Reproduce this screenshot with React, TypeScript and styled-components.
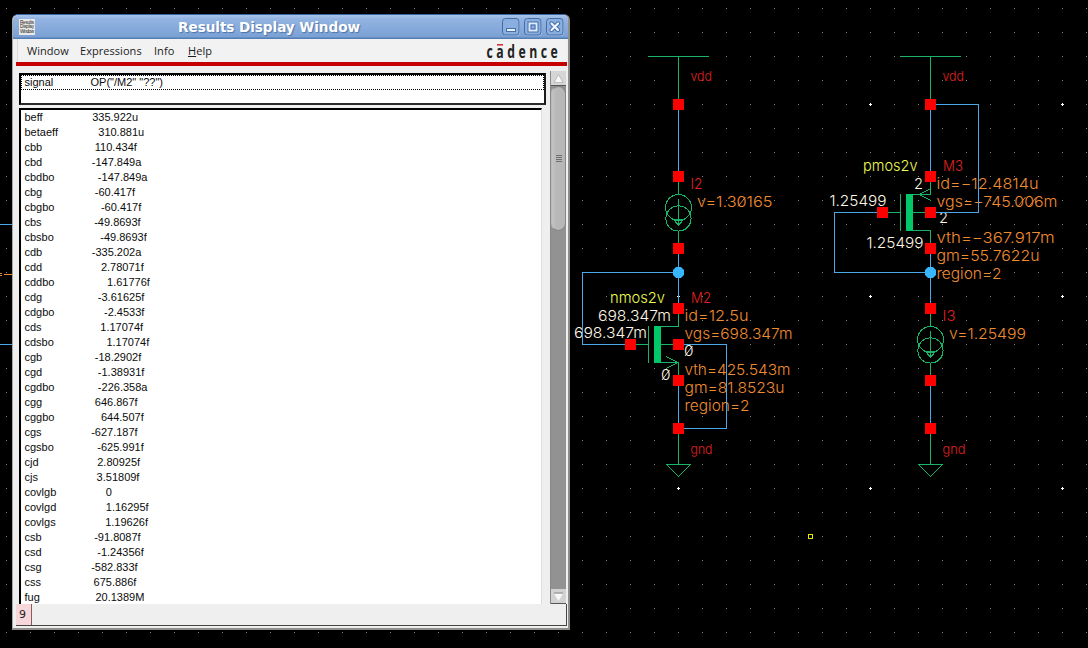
import React from 'react';
import styled, { createGlobalStyle } from 'styled-components';

const Global = createGlobalStyle`
  html, body { margin: 0; padding: 0; background: #000; overflow: hidden; }
  * { box-sizing: border-box; }
`;

const Desktop = styled.main`
  position: relative;
  width: 1088px;
  height: 648px;
  background: #000;
  overflow: hidden;
`;

const Canvas = styled.svg`
  display: block;
  width: 1088px;
  height: 648px;
`;

const Label = styled.text`
  font-family: Inter, 'DejaVu Sans', sans-serif;
  font-weight: 300;
  white-space: pre;
`;

const Win = styled.section`
  position: absolute;
  left: 12px;
  top: 14px;
  width: 558px;
  height: 616px;
  display: flex;
  flex-direction: column;
  background: #efefef;
  border-radius: 6px 6px 0 0;
  border: 1px solid #a9a8a4;
  border-top-color: #3d66a0;
  border-right: 2px solid #8e8d89;
  border-bottom: 2px solid #908f8b;
  overflow: hidden;
`;

const TitleBar = styled.header`
  height: 24px;
  flex: none;
  display: flex;
  align-items: center;
  padding: 0 4px 1px 6px;
  background: linear-gradient(#a9c4ea 0, #93b4e2 15%, #7ba1d4 90%, #5c86bf 96%, #4a73ab);
`;

const AppIcon = styled.svg`
  width: 16px;
  height: 16px;
  display: block;
`;

const Title = styled.h1`
  flex: 1;
  margin: 0;
  padding-left: 1px;
  text-align: center;
  color: #fff;
  font: bold 13.6px/22px 'DejaVu Sans', sans-serif;
  letter-spacing: -0.06px;
  text-shadow: 1px 1px 1px #4c74aa;
`;

const Controls = styled.div`
  display: flex;
  gap: 4px;
`;

const Control = styled.svg`
  width: 18px;
  height: 18px;
  display: block;
`;

const MenuBar = styled.nav`
  height: 23px;
  flex: none;
  margin: 0 2px 0 4px;
  display: flex;
  align-items: center;
  background: #f2f2f2;
  border-left: 1px solid #dadada;
  padding: 0 6px 0 9px;
`;

const MenuItem = styled.span<{ $w: number }>`
  width: ${(p) => p.$w}px;
  color: #1c1c1c;
  font: 11px/20px 'Open Sans', 'Noto Sans', sans-serif;
  letter-spacing: 0.05px;
`;

const Logo = styled.svg`
  width: 76px;
  height: 22px;
  margin-left: auto;
  overflow: visible;
`;

const RedRule = styled.div`
  height: 4px;
  flex: none;
  margin: 0 1px 0 3px;
  background: #c40000;
`;

const Body = styled.div`
  display: flex;
  height: 538px;
  flex: none;
  padding: 5px 1px 0 6px;
`;

const Lists = styled.div`
  width: 527px;
  margin-right: 4px;
  display: flex;
  flex-direction: column;
  padding-top: 2px;
`;

const HeaderBox = styled.div`
  height: 32px;
  flex: none;
  background: #fff;
  border: 2px solid #000;
  border-right-color: #1a1a1a;
  border-bottom-color: #2a2a2a;
`;

const Line = styled.div<{ $focus?: boolean }>`
  height: 15px;
  padding-left: 3.5px;
  white-space: pre;
  color: #0c0c0c;
  font: 11px/15px 'Liberation Sans', Arial, sans-serif;
  ${(p) => p.$focus && 'border: 1px dotted #000; padding-left: 2.5px; line-height: 13px;'}
`;

const Value = styled.span`
  padding-left: 0.6px;
`;

const ListBox = styled.div`
  flex: 1;
  margin: 3px 4px 0 0;
  background: #fff;
  border-left: 2px solid #000;
  border-top: 2px solid #000;
  border-right: 1px solid #ddd;
  overflow: hidden;
`;

const ScrollBar = styled.div`
  width: 16px;
  display: flex;
  flex-direction: column;
  background: #929292;
  border-left: 1px solid #888;
`;

const Arrow = styled.svg`
  width: 15px;
  height: 15px;
  flex: none;
  display: block;
`;

const Thumb = styled.div`
  height: 145px;
  display: flex;
  flex-direction: column;
  align-items: center;
  justify-content: center;
  gap: 1px;
  background: linear-gradient(90deg, #c4c4c4, #b9b9b9 30%, #b6b6b6);
  border: 1px solid #858585;
  border-radius: 8px;
  border-left-color: #bbb;
`;

const Grip = styled.i`
  width: 6px;
  height: 1px;
  background: #6f6f6f;
`;

const Space = styled.div`
  flex: 1;
`;

const Status = styled.footer`
  height: 22px;
  flex: none;
  margin: 0 1px 0 3px;
  display: flex;
  border-bottom: 1px solid #444;
  border-right: 1px solid #444;
`;

const Count = styled.div`
  width: 16px;
  background: #f6d8da;
  border-right: 1px solid #8a5a5c;
  color: #222;
  padding-left: 3px;
  font: 11px/22px 'DejaVu Sans', sans-serif;
`;

const rows: [string, string][] = [
  ['beff', '335.922u'], ['betaeff', '310.881u'], ['cbb', '110.434f'], ['cbd', '-147.849a'],
  ['cbdbo', '-147.849a'], ['cbg', '-60.417f'], ['cbgbo', '-60.417f'], ['cbs', '-49.8693f'],
  ['cbsbo', '-49.8693f'], ['cdb', '-335.202a'], ['cdd', '2.78071f'], ['cddbo', '1.61776f'],
  ['cdg', '-3.61625f'], ['cdgbo', '-2.4533f'], ['cds', '1.17074f'], ['cdsbo', '1.17074f'],
  ['cgb', '-18.2902f'], ['cgd', '-1.38931f'], ['cgdbo', '-226.358a'], ['cgg', '646.867f'],
  ['cggbo', '644.507f'], ['cgs', '-627.187f'], ['cgsbo', '-625.991f'], ['cjd', '2.80925f'],
  ['cjs', '3.51809f'], ['covlgb', '0'], ['covlgd', '1.16295f'], ['covlgs', '1.19626f'],
  ['csb', '-91.8087f'], ['csd', '-1.24356f'], ['csg', '-582.833f'], ['css', '675.886f'],
  ['fug', '20.1389M'],
];

// Pads the name so that decimal points share one character column.
const padName = (name: string, value: string) => name.padEnd(23 - value.split('.')[0].length);

const GREEN = '#18b568';
const BLUE = '#4aa8e8';
const ORANGE = '#f08c30';
const RED = '#e02020';
const CREAM = '#fff6e4';
const YELLOW = '#f0ff50';

const Pin = ({ x, y }: { x: number; y: number }) => (
  <rect x={x - 5} y={y - 5} width={11} height={11} fill="#ff0000" />
);

const Node = ({ x, y }: { x: number; y: number }) => (
  <path
    transform={`translate(${x + 0.5} ${y + 0.5})`}
    d="M-2.5-5.5H2.5L5.5-2.5V2.5L2.5 5.5H-2.5L-5.5 2.5V-2.5Z"
    fill="#38b6ff"
  />
);

const Source = ({ x, y }: { x: number; y: number }) => (
  <g transform={`translate(${x + 0.5} ${y + 0.5})`} stroke={GREEN} fill="none" shapeRendering="crispEdges">
    <path d="M0-36V-18M0 18V36M0-14V13M-5 7H5M-4 8H4M-4 8L0 13L4 8" />
    <circle cx={0} cy={-5} r={13} />
    <circle cx={0} cy={6} r={12.6} />
  </g>
);

type T = { x: number; y: number; w: number; c: string; s: string; z?: number };
const labels: T[] = [
  { x: 690.5, y: 81, w: 21.5, c: RED, s: 'vdd', z: 13 },
  { x: 690.5, y: 189, w: 12, c: RED, s: 'I2' },
  { x: 697, y: 207, w: 75.5, c: ORANGE, s: 'v=1.30165' },
  { x: 610, y: 303, w: 55, c: YELLOW, s: 'nmos2v' },
  { x: 691, y: 303, w: 20, c: RED, s: 'M2' },
  { x: 598, y: 321, w: 73, c: CREAM, s: '698.347m' },
  { x: 574, y: 338, w: 73, c: CREAM, s: '698.347m' },
  { x: 684.5, y: 321, w: 64, c: ORANGE, s: 'id=12.5u' },
  { x: 684.5, y: 339, w: 108, c: ORANGE, s: 'vgs=698.347m' },
  { x: 684, y: 356, w: 9.5, c: CREAM, s: '0' },
  { x: 661, y: 380, w: 9.5, c: CREAM, s: '0' },
  { x: 684.5, y: 375, w: 106, c: ORANGE, s: 'vth=425.543m' },
  { x: 684.5, y: 393, w: 100, c: ORANGE, s: 'gm=81.8523u' },
  { x: 684.5, y: 411, w: 65, c: ORANGE, s: 'region=2' },
  { x: 690.5, y: 454, w: 22, c: RED, s: 'gnd', z: 13 },
  { x: 942.5, y: 81, w: 21.5, c: RED, s: 'vdd', z: 13 },
  { x: 863, y: 171, w: 54.5, c: YELLOW, s: 'pmos2v' },
  { x: 943, y: 171, w: 20, c: RED, s: 'M3' },
  { x: 914, y: 189, w: 9, c: CREAM, s: '2' },
  { x: 939, y: 223, w: 9, c: CREAM, s: '2' },
  { x: 829.5, y: 206, w: 57, c: CREAM, s: '1.25499' },
  { x: 866.5, y: 248, w: 57, c: CREAM, s: '1.25499' },
  { x: 936.5, y: 189, w: 102, c: ORANGE, s: 'id=−12.4814u' },
  { x: 936.5, y: 207, w: 121, c: ORANGE, s: 'vgs=−745.006m' },
  { x: 936.5, y: 243, w: 118, c: ORANGE, s: 'vth=−367.917m' },
  { x: 936.5, y: 261, w: 103, c: ORANGE, s: 'gm=55.7622u' },
  { x: 936.5, y: 279, w: 65, c: ORANGE, s: 'region=2' },
  { x: 942.5, y: 321, w: 13, c: RED, s: 'I3' },
  { x: 949, y: 339, w: 77, c: ORANGE, s: 'v=1.25499' },
  { x: 942.5, y: 454, w: 23, c: RED, s: 'gnd', z: 13 },
];

const pins: [number, number][] = [
  [678, 104], [678, 176], [678, 248], [678, 308], [678, 344], [630, 344], [678, 380], [678, 428],
  [930, 104], [930, 176], [930, 212], [882, 212], [930, 248], [930, 308], [930, 380], [930, 428],
];

const majors: [number, number][] = [
  [870, 104], [1062, 104], [678, 296], [870, 296], [1062, 296], [678, 488], [870, 488], [1062, 488],
];

const Schematic = () => (
  <Canvas viewBox="0 0 1088 648">
    <defs>
      <pattern id="dots" width="24" height="24" patternUnits="userSpaceOnUse">
        <rect x="6" y="8" width="1" height="1" fill="#8c8c8c" />
      </pattern>
    </defs>
    <rect width="1088" height="648" fill="url(#dots)" />
    {majors.map(([x, y]) => (
      <path key={`${x}-${y}`} d={`M${x - 1} ${y + 0.5}h3M${x + 0.5} ${y - 1}v3`} stroke="#fff" />
    ))}
    {labels.map((l, i) => (
      <Label key={i} x={l.x} y={l.y + 0.3} fill={l.c} fontSize={l.z ?? 14.8} textLength={l.w} lengthAdjust="spacingAndGlyphs">
        {l.s}
      </Label>
    ))}
    <g fill="none" strokeWidth="0.9">
      <path d="M685 356L692.5 346M662 380L669.5 370" stroke={CREAM} />
      <path d="M738 206.5L745.5 197M1018 206.5L1025.5 197M1029 206.5L1036.5 197" stroke={ORANGE} />
    </g>
    <g fill="none" shapeRendering="crispEdges" stroke={BLUE}>
      <path d="M0 224.5H12M0 344.5H12" />
      <path d="M678.5 104V176M678.5 248V308M678.5 272.5H582.5V344.5H630M678.5 344.5H726.5V428.5H678.5V380" />
      <path d="M930.5 104V176M930.5 104.5H978.5V212.5H930M882 212.5H834.5V272.5H930.5V248M930.5 272V308M930.5 380V428" />
      <path d="M0 273.5H2M0 275.5H2M4 274.5H12" stroke={ORANGE} />
    </g>
    <g fill="none" shapeRendering="crispEdges" stroke={GREEN}>
      <path d="M648 56.5H709M678.5 56V104M900 56.5H961M930.5 56V104" />
      <path d="M678.5 428V464.5M666.5 464.5H690.5L678.5 476.5ZM930.5 428V464.5M918.5 464.5H942.5L930.5 476.5Z" />
      <path d="M678.5 308V326.5H654M630 344.5H648.5M648.5 326V363M660 344.5H678M654 362.5H678.5V380M666 356.5L678 362.5L666 368.5" />
      <path d="M930.5 176V194.5H906M882 212.5H900.5M900.5 194V231M912 212.5H930M906 230.5H930.5V248M931 188.5L919 194.5L931 200.5" />
    </g>
    <rect x="654" y="326" width="7" height="37" fill="#00c868" />
    <rect x="906" y="194" width="7" height="37" fill="#00c868" />
    <Source x={678} y={212} />
    <Source x={930} y={344} />
    {pins.map(([x, y]) => <Pin key={`${x}-${y}`} x={x} y={y} />)}
    <Node x={678} y={272} />
    <Node x={930} y={272} />
    <rect x="808.5" y="534.5" width="4" height="4" fill="none" stroke="#e6e600" />
  </Canvas>
);

const ControlButton = ({ children }: { children: React.ReactNode }) => (
  <Control viewBox="0 0 18 18">
    <rect x="1" y="1" width="16.5" height="16.5" rx="3" fill="none" stroke="#a9c6ee" />
    <rect x="0.5" y="0.5" width="16.5" height="16.5" rx="3" fill="#8aaee0" stroke="#436ca4" />
    {children}
  </Control>
);

export default function App() {
  return (
    <Desktop>
      <Global />
      <Schematic />
      <Win>
        <TitleBar>
          <AppIcon viewBox="0 0 16 16">
            <rect width="16" height="16" fill="#e9e9e6" />
            <g fontFamily="'Liberation Sans', sans-serif" fontSize="4.6" fill="#222">
              <text x="1" y="5" textLength="14">Results</text>
              <text x="1" y="9.4" textLength="14">Display</text>
              <text x="1" y="14" textLength="14">Window</text>
            </g>
          </AppIcon>
          <Title>Results Display Window</Title>
          <Controls>
            <ControlButton>
              <rect x="4.5" y="10.5" width="9" height="3" fill="#e8f1ff" stroke="#466fa6" />
            </ControlButton>
            <ControlButton>
              <rect x="5.5" y="5.5" width="7" height="7" fill="none" stroke="#466fa6" strokeWidth="4" />
              <rect x="5.5" y="5.5" width="7" height="7" fill="#8aaee0" stroke="#dfebff" strokeWidth="2" />
              <rect x="7" y="7" width="4" height="4" fill="none" stroke="#466fa6" />
            </ControlButton>
            <ControlButton>
              <path d="M5.5 5.5L12 12M12 5.5L5.5 12" stroke="#466fa6" strokeWidth="4.4" strokeLinecap="round" />
              <path d="M5.5 5.5L12 12M12 5.5L5.5 12" stroke="#eef5ff" strokeWidth="2.2" strokeLinecap="round" />
            </ControlButton>
          </Controls>
        </TitleBar>
        <MenuBar>
          <MenuItem $w={53}>Window</MenuItem>
          <MenuItem $w={74}>Expressions</MenuItem>
          <MenuItem $w={34}>Info</MenuItem>
          <MenuItem $w={30}><u>H</u>elp</MenuItem>
          <Logo viewBox="0 0 76 22">
            <text x="0" y="0" transform="translate(2.5 18) scale(.72 1)" fontFamily="'Open Sans', sans-serif" fontWeight="700" fontSize="17" fill="#222" textLength="99" lengthAdjust="spacing">cadence</text>
            <rect x="13" y="4" width="6" height="1.6" fill="#d8333a" />
          </Logo>
        </MenuBar>
        <RedRule />
        <Body>
          <Lists>
            <HeaderBox>
              <Line $focus>{'signal'.padEnd(18)}<Value>{'OP("/M2" "??")'}</Value></Line>
            </HeaderBox>
            <ListBox>
              {rows.map(([name, value]) => (
                <Line key={name}>{padName(name, value)}<Value>{value}</Value></Line>
              ))}
            </ListBox>
          </Lists>
          <ScrollBar>
            <Arrow viewBox="0 0 15 15">
              <rect width="15" height="15" fill="#d6d6d6" />
              <path d="M0 14.5H15" stroke="#555" />
              <path d="M7.5 3.5L12 11.5H3Z" fill="#f8f8f8" stroke="#aaa" strokeWidth=".7" />
            </Arrow>
            <Thumb><Grip /><Grip /><Grip /><Grip /></Thumb>
            <Space />
            <Arrow viewBox="0 0 15 15">
              <rect width="15" height="15" fill="#d2d2d2" />
              <path d="M0 14.5H15" stroke="#555" />
              <path d="M7.5 12L3 4.5H12Z" fill="#f8f8f8" />
              <path d="M3 4H12" stroke="#888" />
            </Arrow>
          </ScrollBar>
        </Body>
        <Status><Count>9</Count></Status>
      </Win>
    </Desktop>
  );
}
